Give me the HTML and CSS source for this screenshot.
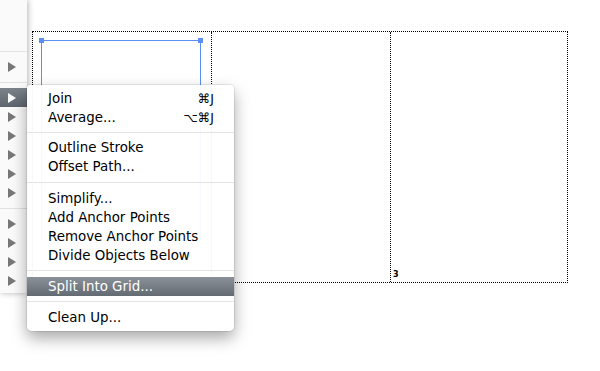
FILE: index.html
```html
<!DOCTYPE html>
<html lang="en">
<head>
  <meta charset="UTF-8" />
  <title>Path menu</title>
  <link rel="stylesheet" href="styles.css">
</head>
<body>
  <div class="stage">

    <!-- Artboards (dotted grid) -->
    <div class="grid">
      <div class="cell"></div>
      <div class="cell"></div>
      <div class="cell"><span class="num">3</span></div>
    </div>

    <!-- Selected object -->
    <div class="sel">
      <span class="handle tl"></span>
      <span class="handle tr"></span>
    </div>

    <!-- Left panel -->
    <div class="panel">
      <div class="ptop"></div>
      <div class="prow tall"><i class="tri"></i></div>
      <div class="pgap"></div>
      <div class="prow active"><i class="tri"></i></div>
      <div class="prow"><i class="tri"></i></div>
      <div class="prow"><i class="tri"></i></div>
      <div class="prow"><i class="tri"></i></div>
      <div class="prow"><i class="tri"></i></div>
      <div class="prow"><i class="tri"></i></div>
      <div class="psep"></div>
      <div class="prow"><i class="tri"></i></div>
      <div class="prow"><i class="tri"></i></div>
      <div class="prow"><i class="tri"></i></div>
      <div class="prow"><i class="tri"></i></div>
    </div>

    <!-- Context menu -->
    <div class="menu">
      <div class="item"><span>Join</span><span class="key">⌘J</span></div>
      <div class="item"><span>Average...</span><span class="key">⌥⌘J</span></div>
      <div class="sep s11"></div>
      <div class="item"><span>Outline Stroke</span></div>
      <div class="item"><span>Offset Path...</span></div>
      <div class="sep s13"></div>
      <div class="item"><span>Simplify...</span></div>
      <div class="item"><span>Add Anchor Points</span></div>
      <div class="item"><span>Remove Anchor Points</span></div>
      <div class="item"><span>Divide Objects Below</span></div>
      <div class="sep"></div>
      <div class="item hi"><span>Split Into Grid...</span></div>
      <div class="sep"></div>
      <div class="item"><span>Clean Up...</span></div>
    </div>

  </div>
</body>
</html>
```

FILE: styles.css
```css
body {
  margin: 0;
  background: #ffffff;
  font-family: "DejaVu Sans", "Liberation Sans", sans-serif;
}

.stage {
  position: relative;
  width: 600px;
  height: 371px;
  overflow: hidden;
  background: #ffffff;
}

/* artboards */
.grid {
  position: absolute;
  left: 32px;
  top: 31px;
  width: 536px;
  height: 252px;
  display: flex;
  border: 1px dotted #000;
  box-sizing: border-box;
}

.cell {
  position: relative;
  width: 178px;
  border-right: 1px dotted #000;
}

.cell:last-child {
  flex: 1;
  border-right: none;
}

.num {
  position: absolute;
  left: 2px;
  bottom: 3px;
  font-size: 8px;
  font-weight: bold;
  line-height: 8px;
  color: #000;
}

/* selection */
.sel {
  position: absolute;
  left: 41px;
  top: 40px;
  width: 158px;
  height: 200px;
  border: 1px solid #5b8ff5;
  border-bottom: none;
}

.handle {
  position: absolute;
  top: -3px;
  width: 5px;
  height: 5px;
  background: #5b8ff5;
}

.handle.tl { left: -3px; }
.handle.tr { right: -3px; }

/* left panel */
.panel {
  position: absolute;
  left: 0;
  top: 0;
  width: 27px;
  height: 293px;
  background: #fafafa;
  box-shadow: 1px 0 6px rgba(0, 0, 0, 0.3);
}

.ptop {
  height: 51px;
  border-bottom: 1px solid #e2e2e2;
}

.prow {
  height: 19px;
  display: flex;
  align-items: center;
  padding-left: 8px;
}

.prow.tall {
  height: 30px;
  border-bottom: 1px solid #e2e2e2;
}

.pgap {
  height: 5px;
}

.psep {
  height: 6px;
  border-bottom: 1px solid #e2e2e2;
  margin-bottom: 5px;
}

.tri {
  width: 0;
  height: 0;
  border-left: 8px solid #777;
  border-top: 5px solid transparent;
  border-bottom: 5px solid transparent;
}

.prow.active {
  background: linear-gradient(#7c838b, #5e656d);
}

.prow.active .tri {
  border-left-color: #fff;
}

/* context menu */
.menu {
  position: absolute;
  left: 27px;
  top: 85px;
  width: 207px;
  padding: 4px 0 4px;
  background: rgba(255, 255, 255, 0.95);
  border-radius: 3px 4px 5px 5px;
  box-shadow: 0 0 0 1px rgba(0, 0, 0, 0.08), 0 7px 16px rgba(0, 0, 0, 0.35);
  font-size: 13.4px;
  color: #000;
}

.item {
  height: 19px;
  display: flex;
  align-items: center;
  justify-content: space-between;
  padding: 0 20px 0 21px;
}

.key {
  font-size: 12.5px;
}

.item.hi {
  background: linear-gradient(#8a9199, #636a72);
  color: #fff;
}

.sep {
  height: 5px;
  margin-bottom: 6px;
  border-bottom: 1px solid #e4e4e4;
}

.sep.s11 {
  height: 5px;
  margin-bottom: 5px;
}

.sep.s13 {
  height: 6px;
  margin-bottom: 6px;
}
```
